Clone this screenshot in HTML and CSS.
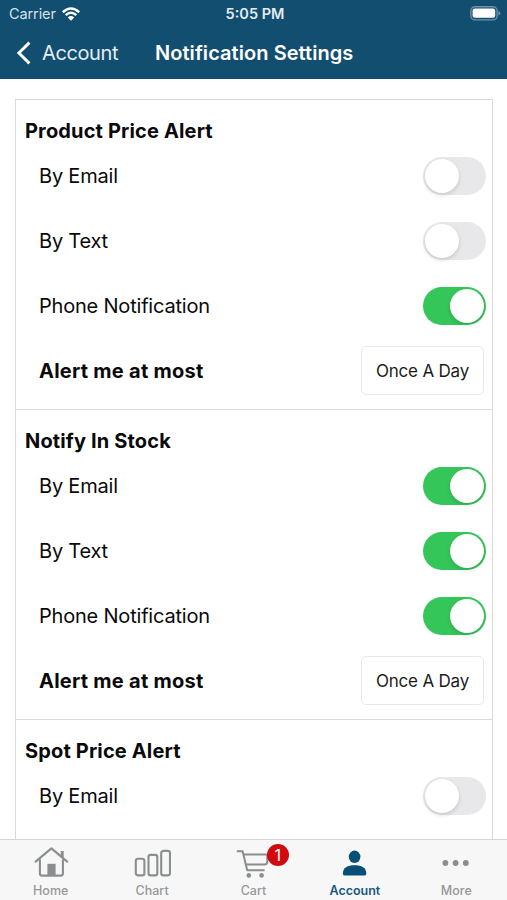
FILE: index.html
```html
<!DOCTYPE html>
<html lang="en">
<head>
    <meta charset="UTF-8">
    <meta name="viewport" content="width=device-width, initial-scale=1.0">
    <title>Notification Settings</title>
    <link rel="stylesheet" href="styles.css">
</head>
<body>

<header class="header">
    <div class="status-bar">
        <div class="carrier">
            <span class="carrier-name">Carrier</span>
            <svg class="wifi" width="18" height="14" viewBox="0 0 18 14">
                <path d="M0.8 5.2 Q9 -2.2 17.2 5.2" fill="none" stroke="#fff" stroke-width="2.5"/>
                <path d="M3.7 8.2 Q9 3.4 14.3 8.2" fill="none" stroke="#fff" stroke-width="2.3"/>
                <path d="M9 13.8 L5.8 10.4 Q9 7.8 12.2 10.4 Z" fill="#fff"/>
            </svg>
        </div>
        <div class="clock">5:05 PM</div>
        <svg class="battery" width="31" height="15" viewBox="0 0 31 15">
            <rect x="0.9" y="0.7" width="26.2" height="13.2" rx="4" fill="none" stroke="#6d91a9" stroke-width="1.4"/>
            <rect x="2.6" y="2.6" width="22.6" height="9.2" rx="2" fill="#fff"/>
            <path d="M28.4 5 Q30.4 5.6 30.4 7.3 Q30.4 9 28.4 9.6 Z" fill="#6d91a9"/>
        </svg>
    </div>
    <div class="nav-bar">
        <a class="back">
            <svg width="16" height="24" viewBox="0 0 16 24">
                <path d="M14.4 1.6 L3.9 12 L14.4 22.4" fill="none" stroke="#fff" stroke-width="2.9"/>
            </svg>
            <span class="back-label">Account</span>
        </a>
        <h1 class="title">Notification Settings</h1>
    </div>
</header>

<main class="content">
    <section class="group">
        <h2 class="group-title">Product Price Alert</h2>
        <div class="row"><span class="label">By Email</span><span class="switch"></span></div>
        <div class="row"><span class="label">By Text</span><span class="switch"></span></div>
        <div class="row"><span class="label">Phone Notification</span><span class="switch on"></span></div>
        <div class="row"><span class="label strong">Alert me at most</span><button class="frequency">Once A Day</button></div>
    </section>
    <section class="group">
        <h2 class="group-title">Notify In Stock</h2>
        <div class="row"><span class="label">By Email</span><span class="switch on"></span></div>
        <div class="row"><span class="label">By Text</span><span class="switch on"></span></div>
        <div class="row"><span class="label">Phone Notification</span><span class="switch on"></span></div>
        <div class="row"><span class="label strong">Alert me at most</span><button class="frequency">Once A Day</button></div>
    </section>
    <section class="group">
        <h2 class="group-title">Spot Price Alert</h2>
        <div class="row"><span class="label">By Email</span><span class="switch"></span></div>
    </section>
</main>

<nav class="tab-bar">
    <a class="tab">
        <svg class="icon" width="36" height="34" viewBox="0 0 36 34" fill="none" stroke="#8b8e8f" stroke-width="2.1">
            <path d="M2.6 15.6 L18.4 2.4 L34.2 15.6" stroke-linecap="round" stroke-linejoin="round"/>
            <path d="M6.9 13.2 V27.5 Q6.9 29.6 9 29.6 H27.8 Q29.9 29.6 29.9 27.5 V13.2"/>
            <path d="M29.2 5 V11.5" stroke-width="3"/>
            <rect x="14.4" y="17.8" width="8.2" height="12" fill="#8b8e8f" stroke="none"/>
        </svg>
        <span class="tab-label">Home</span>
    </a>
    <a class="tab">
        <svg class="icon" width="38" height="34" viewBox="0 0 38 34" fill="none" stroke="#8b8e8f" stroke-width="2.1">
            <rect x="2.8" y="12.8" width="8.6" height="16.6" rx="2.2"/>
            <rect x="15.5" y="8.9" width="8.8" height="20.5" rx="2.2"/>
            <rect x="28.2" y="4.9" width="8.8" height="24.5" rx="2.2"/>
        </svg>
        <span class="tab-label">Chart</span>
    </a>
    <a class="tab">
        <svg class="icon" width="34" height="34" viewBox="0 0 34 34" fill="none" stroke="#8b8e8f" stroke-width="2">
            <path d="M0.8 5.2 H6.6 L11.2 24.2 H28.6" stroke-linejoin="round"/>
            <path d="M7.6 8.6 H31.3 V15.5 Q31.3 18.4 28.4 18.6 H10"/>
            <circle cx="12.8" cy="29.4" r="2.3" fill="#8b8e8f" stroke="none"/>
            <circle cx="25.6" cy="29.4" r="2.3" fill="#8b8e8f" stroke="none"/>
        </svg>
        <span class="badge">1</span>
        <span class="tab-label">Cart</span>
    </a>
    <a class="tab active">
        <svg class="icon" width="26" height="34" viewBox="0 0 26 34" fill="#084f76">
            <ellipse cx="12.6" cy="10.8" rx="5.8" ry="6.2"/>
            <path d="M0.9 27.4 C0.9 21.5 5.6 19.2 12.6 19.2 C19.6 19.2 24.3 21.5 24.3 27.4 Q24.3 29.6 22.2 29.6 H3 Q0.9 29.6 0.9 27.4 Z"/>
        </svg>
        <span class="tab-label">Account</span>
    </a>
    <a class="tab">
        <svg class="icon" width="30" height="34" viewBox="0 0 30 34" fill="#8b8e8f">
            <circle cx="4.4" cy="17" r="2.9"/>
            <circle cx="14.6" cy="17" r="2.9"/>
            <circle cx="24.8" cy="17" r="2.9"/>
        </svg>
        <span class="tab-label">More</span>
    </a>
</nav>

</body>
</html>
```
FILE: styles.css
```css
* {
    box-sizing: border-box;
}

body {
    font-family: Inter, "Liberation Sans", sans-serif;
    display: flex;
    flex-direction: column;
    height: 100vh;
    margin: 0;
    overflow: hidden;
    background-color: #fff;
    color: #0a0a0a;
}

.header {
    height: 79px;
    flex-shrink: 0;
    background-color: #124e70;
    color: #fff;
}

.status-bar {
    height: 27px;
    padding: 0 6px 0 9px;
    display: grid;
    grid-template-columns: 1fr auto 1fr;
    align-items: center;
}

.carrier {
    display: flex;
    align-items: center;
    gap: 6px;
    color: #d5e1e9;
}

.carrier-name {
    font-size: 14.5px;
    letter-spacing: -0.1px;
}

.clock {
    font-size: 14.5px;
    font-weight: 600;
    color: #e3ebf0;
}

.battery {
    justify-self: end;
}

.nav-bar {
    height: 52px;
    display: flex;
    align-items: center;
    padding: 0 0 1px 15px;
}

.back {
    width: 140px;
    display: flex;
    align-items: center;
    gap: 11px;
    font-size: 20px;
    letter-spacing: -0.4px;
    color: #e4edf3;
}

.title {
    margin: 0;
    font-size: 20px;
    font-weight: 600;
    letter-spacing: 0.06px;
}

.content {
    flex: 1;
    min-height: 0;
    overflow: hidden;
    padding: 20px 14px 0 15px;
}

.group {
    height: 310px;
    padding: 15px 6px 0 9px;
    border: 1px solid #d9d9d9;
    border-bottom: none;
}

.group-title {
    height: 28px;
    margin: 0;
    line-height: 32px;
    font-size: 20px;
    font-weight: 700;
    letter-spacing: 0.15px;
}

.row {
    height: 65px;
    padding-left: 14px;
    display: flex;
    align-items: center;
    justify-content: space-between;
}

.label {
    font-size: 20px;
    letter-spacing: -0.2px;
}

.strong {
    font-weight: 700;
    letter-spacing: 0.25px;
}

.switch {
    width: 63px;
    height: 38px;
    padding: 2px;
    display: flex;
    border-radius: 19px;
    background-color: #e8e8ea;
}

.switch::after {
    content: "";
    width: 34px;
    height: 34px;
    border-radius: 50%;
    background-color: #fff;
    box-shadow: 0 2px 4px rgba(0, 0, 0, 0.14);
}

.switch.on {
    justify-content: flex-end;
    background-color: #34c659;
}

.frequency {
    width: 123px;
    height: 49px;
    margin-right: 2px;
    padding: 0;
    font-family: inherit;
    font-size: 17px;
    letter-spacing: -0.2px;
    color: #1c1c1c;
    background-color: #fff;
    border: 1px solid #e8e8e8;
    border-radius: 5px;
}

.tab-bar {
    height: 61px;
    flex-shrink: 0;
    display: grid;
    grid-template-columns: repeat(5, 1fr);
    border-top: 1px solid #d4d5d5;
    background-color: #f7f7f7;
}

.tab {
    position: relative;
    display: flex;
    flex-direction: column;
    align-items: center;
    padding-top: 6px;
    color: #96999a;
}

.tab-label {
    margin-top: 3px;
    font-size: 12.5px;
    font-weight: 500;
    line-height: 16px;
}

.tab.active {
    color: #175a80;
}

.active .tab-label {
    font-weight: 600;
}

.badge {
    position: absolute;
    top: 4px;
    left: 64px;
    width: 22px;
    height: 22px;
    border-radius: 50%;
    background-color: #d20a10;
    color: #fff;
    font-size: 16px;
    line-height: 22px;
    text-align: center;
}
```
